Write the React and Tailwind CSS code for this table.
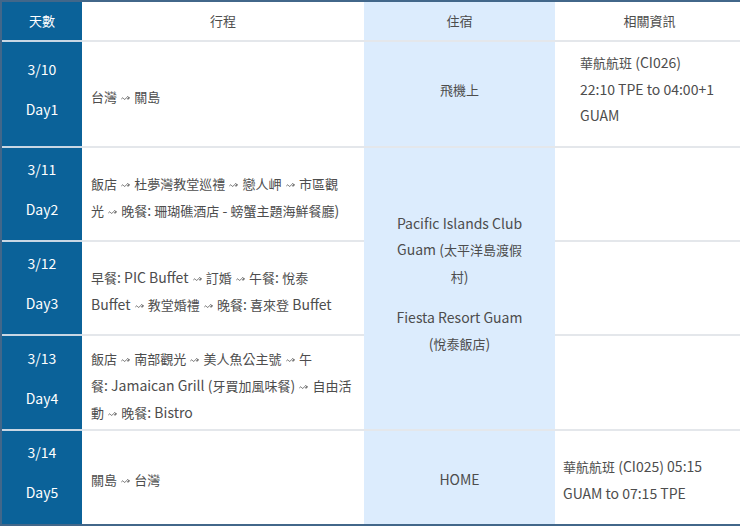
const font = "font-['Noto_Sans_CJK_TC','Noto_Sans',sans-serif]";

// small wavy arrow used between stops
const Arrow = () => (
  <svg
    width="9"
    height="6"
    viewBox="0 0 9 6"
    className="inline-block align-middle mx-[1px]"
    fill="none"
    stroke="#666"
    strokeWidth="1"
    strokeLinecap="round"
    strokeLinejoin="round"
  >
    <path d="M0.6 3.6 Q1.6 2 2.6 3.6 T4.6 3.6 T6.6 3.4 L8.2 2.8" />
    <path d="M6.6 1.6 L8.3 2.8 L7.1 4.4" />
  </svg>
);

// CJK runs are set a bit smaller than the latin text, arrows drawn as svg
const cjk = /([\u3000-\u9fff\uff00-\uffef]+)/;
const txt = (s) =>
  s.split("~>").map((part, i) => (
    <span key={i}>
      {i > 0 && <Arrow />}
      {part.split(cjk).map((p, j) =>
        j % 2 ? (
          <span key={j} className="text-[13px]">
            {p}
          </span>
        ) : (
          p
        )
      )}
    </span>
  ));

const Line = ({ s }) => <div className="whitespace-nowrap">{txt(s)}</div>;

const DayCell = ({ date, day, last }) => (
  <td
    className={`bg-[#0b6299] text-white text-center align-middle border-b-2 ${
      last ? "border-transparent" : "border-[#c9d7e4]"
    }`}
  >
    <div className="flex flex-col gap-[14px] pb-[10px]">
      <span>{date}</span>
      <span>{day}</span>
    </div>
  </td>
);

const Plan = ({ lines, last }) => (
  <td className={`bg-white align-middle pl-[9px] border-b-2 ${last ? "border-transparent" : "border-[#e4e7eb]"}`}>
    <div className="pt-[5px]">
      {lines.map((l, i) => (
        <Line key={i} s={l} />
      ))}
    </div>
  </td>
);

export default function App() {
  return (
    <div className={`w-[740px] h-[526px] overflow-hidden bg-white ${font} text-[14px] leading-[26px] text-[#4d4d4d]`}>
      <div className="w-[744px] border-t-2 border-l-2 border-b-[3px] border-[#42678a]">
        <table className="table-fixed border-separate border-spacing-0 w-[742px]">
          <colgroup>
            <col className="w-[80px]" />
            <col className="w-[282px]" />
            <col className="w-[191px]" />
            <col className="w-[189px]" />
          </colgroup>
          <tbody>
            <tr className="h-[40px]">
              <td className="bg-[#0b6299] text-white text-center align-middle border-b-2 border-[#c9d7e4]">
                <div className="pb-[1px]">{txt("天數")}</div>
              </td>
              <td className="bg-white text-center align-middle border-b-2 border-[#e4e7eb]">
                <div className="pb-[1px]">{txt("行程")}</div>
              </td>
              <td className="bg-[#dcecfd] text-center align-middle border-b-2 border-[#e4e7eb]">
                <div className="pb-[1px]">{txt("住宿")}</div>
              </td>
              <td className="bg-white text-center align-middle border-b-2 border-[#e4e7eb]">
                <div className="pb-[1px]">{txt("相關資訊")}</div>
              </td>
            </tr>
            <tr className="h-[106px]">
              <DayCell date="3/10" day="Day1" />
              <Plan lines={["台灣 ~> 關島"]} />
              <td className="bg-[#dcecfd] text-center align-middle border-b-2 border-[#e4e7eb]">
                <div className="pb-[9px]">{txt("飛機上")}</div>
              </td>
              <td className="bg-white align-middle pl-[25px] border-b-2 border-[#e4e7eb]">
                <div className="pb-[11px]">
                  <Line s="華航航班 (CI026)" />
                  <Line s="22:10 TPE to 04:00+1" />
                  <Line s="GUAM" />
                </div>
              </td>
            </tr>
            <tr className="h-[94px]">
              <DayCell date="3/11" day="Day2" />
              <Plan lines={["飯店 ~> 杜夢灣教堂巡禮 ~> 戀人岬 ~> 市區觀", "光 ~> 晚餐: 珊瑚礁酒店 - 螃蟹主題海鮮餐廳)"]} />
              <td rowSpan={3} className="bg-[#dcecfd] text-center align-middle px-[16px] border-b-2 border-[#e4e7eb]">
                <div className="pb-[10px]">
                  <Line s="Pacific Islands Club" />
                  <Line s="Guam (太平洋島渡假" />
                  <Line s="村)" />
                  <div className="mt-[14px]">
                    <Line s="Fiesta Resort Guam" />
                    <Line s="(悅泰飯店)" />
                  </div>
                </div>
              </td>
              <td className="bg-white border-b-2 border-[#e4e7eb]"></td>
            </tr>
            <tr className="h-[94px]">
              <DayCell date="3/12" day="Day3" />
              <Plan lines={["早餐: PIC Buffet ~> 訂婚 ~> 午餐: 悅泰", "Buffet ~> 教堂婚禮 ~> 晚餐: 喜來登 Buffet"]} />
              <td className="bg-white border-b-2 border-[#e4e7eb]"></td>
            </tr>
            <tr className="h-[95px]">
              <DayCell date="3/13" day="Day4" />
              <Plan
                lines={[
                  "飯店 ~> 南部觀光 ~> 美人魚公主號 ~> 午",
                  "餐: Jamaican Grill (牙買加風味餐) ~> 自由活",
                  "動 ~> 晚餐: Bistro",
                ]}
              />
              <td className="bg-white border-b-2 border-[#e4e7eb]"></td>
            </tr>
            <tr className="h-[93px]">
              <DayCell date="3/14" day="Day5" last />
              <Plan lines={["關島 ~> 台灣"]} last />
              <td className="bg-[#dcecfd] text-center align-middle">
                <div className="pt-[2px]">HOME</div>
              </td>
              <td className="bg-white align-middle pl-[8px]">
                <div className="pt-[3px]">
                  <Line s="華航航班 (CI025) 05:15" />
                  <Line s="GUAM to 07:15 TPE" />
                </div>
              </td>
            </tr>
          </tbody>
        </table>
      </div>
    </div>
  );
}
